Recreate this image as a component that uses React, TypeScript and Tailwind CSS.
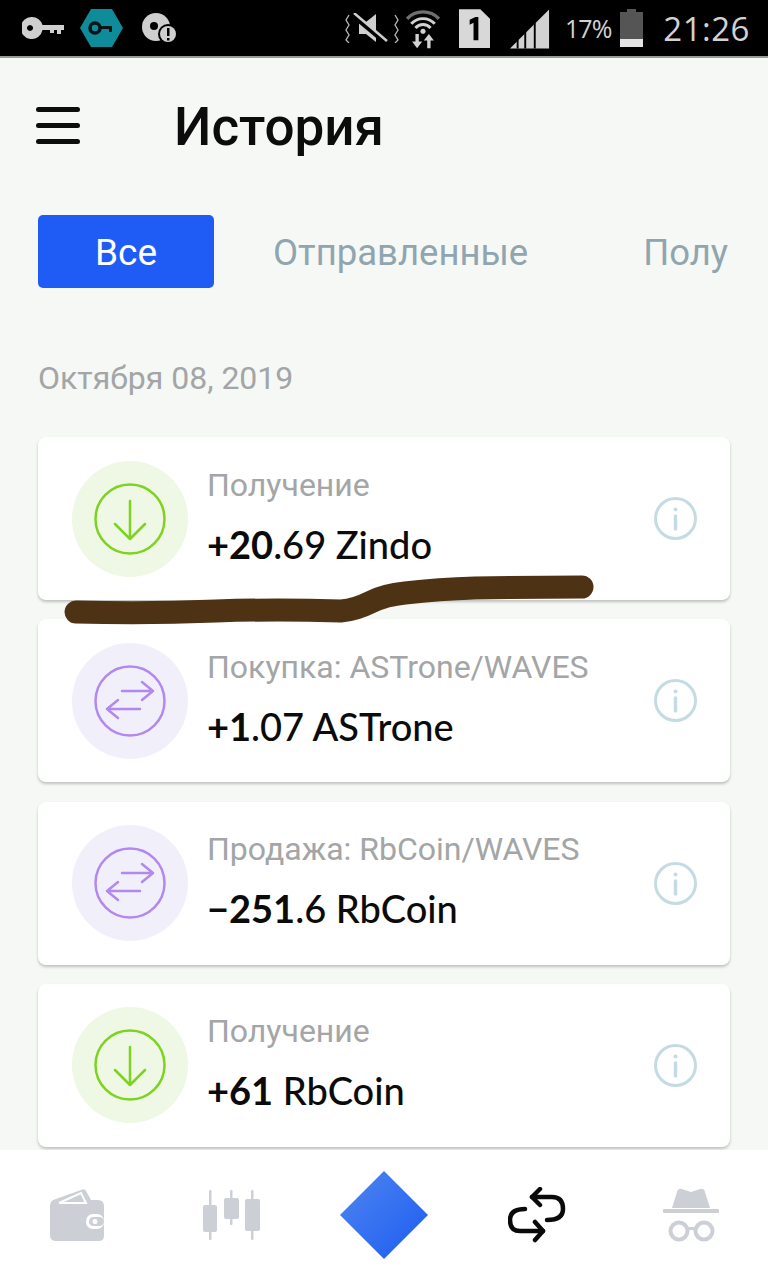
import React from 'react'

type Tx = {
  kind: 'in' | 'swap'
  title: string
  strong: string
  rest: string
}

const txs: Tx[] = [
  { kind: 'in', title: 'Получение', strong: '+20', rest: '.69 Zindo' },
  { kind: 'swap', title: 'Покупка: ASTrone/WAVES', strong: '+1', rest: '.07 ASTrone' },
  { kind: 'swap', title: 'Продажа: RbCoin/WAVES', strong: '−251', rest: '.6 RbCoin' },
  { kind: 'in', title: 'Получение', strong: '+61', rest: ' RbCoin' },
]

const LeftIcons = () => (
  <div className="flex items-center">
    <svg width="42" height="22" viewBox="0 0 42 22" className="ml-[22px]" fill="#cfcfcf">
      <path fillRule="evenodd" d="M10 0a11 11 0 0 1 10.500 8H42v5h-3v4h-4v-4h-3v3h-4v-3h-7.500A11 11 0 1 1 10 0zm-2 8a3 3 0 1 0 .01 0z" />
    </svg>
    <svg width="43" height="38" viewBox="0 0 43 38" className="ml-[16px]">
      <path d="M11 0h21l11 19-11 19H11L0 19z" fill="#0e8c99" />
      <circle cx="15" cy="19" r="5" fill="none" stroke="#0b1416" strokeWidth="3.500" />
      <path d="M20 17h12v6h-3v-3h-9z" fill="#0b1416" />
    </svg>
    <svg width="36" height="31" viewBox="0 0 36 31" className="ml-[19px]">
      <circle cx="14" cy="14" r="14" fill="#cfcfcf" />
      <circle cx="12" cy="13" r="4" fill="#000" />
      <circle cx="26" cy="21" r="10" fill="#000" />
      <circle cx="26" cy="21" r="8" fill="#cfcfcf" />
      <path d="M25 15h2.500v8H25zM25 25h2.500v2.500H25z" fill="#000" />
    </svg>
  </div>
)

const RightIcons = () => (
  <div className="flex items-center text-[#d2d2d2]">
    <svg width="54" height="30" viewBox="0 0 54 30" fill="none" className="mr-[5px]">
      <path d="M4 2L1 7l3 5-3 5 3 5-3 5 3 3M50 2l3 5-3 5 3 5-3 5 3 5-3 3" stroke="#b8b8b8" strokeWidth="1.300" />
      <path d="M14 9h7l10-8v28l-10-8h-7z" fill="#cfcfcf" />
      <path d="M9 3l32 27" stroke="#000" strokeWidth="5" />
      <path d="M9 0l33 28" stroke="#cfcfcf" strokeWidth="2.500" />
    </svg>
    <svg width="38" height="42" viewBox="0 0 40 50" fill="none" className="mr-[17px]">
      <path d="M1 14a26 26 0 0 1 38 0" stroke="#6f6f6f" strokeWidth="4" />
      <path d="M6 20a19 19 0 0 1 28 0" stroke="#d2d2d2" strokeWidth="3.500" />
      <path d="M11 25a12 12 0 0 1 18 0" stroke="#d2d2d2" strokeWidth="3.500" />
      <circle cx="20" cy="29" r="3" fill="#d2d2d2" />
      <path d="M11 32h4v9h4l-6 8-6-8h4zM25 49v-9h-4l6-8 6 8h-4v9z" fill="#d2d2d2" />
    </svg>
    <svg width="31" height="39" viewBox="0 0 32 40" className="mr-[20px]">
      <path d="M0 0h22l10 10v30H0z" fill="#d8d8d8" />
      <path d="M11 11l6-3h3v24h-5V14l-4 2z" fill="#000" />
    </svg>
    <svg width="40" height="41" viewBox="0 0 42 42" className="mr-[15px]">
      <path d="M0 42l41-41v41z" fill="#d2d2d2" />
      <path d="M8 42V33M16 42V24M26 42V14" stroke="#000" strokeWidth="2" />
    </svg>
    <span className="text-[25px] leading-none font-['Open_Sans',sans-serif] tracking-[-1px] mr-[9px]">17%</span>
    <div className="w-[23px] h-[38px] mr-[20px] flex flex-col items-center">
      <div className="w-[9px] h-[3px] bg-[#555]" />
      <div className="w-[23px] flex-1 bg-[#555] flex flex-col justify-end">
        <div className="h-[8px] bg-[#e4e4e4]" />
      </div>
    </div>
    <span className="text-[33px] leading-none font-['Open_Sans',sans-serif] mr-[18px] tracking-[0.500px]">21:26</span>
  </div>
)

const ReceiveIcon = () => (
  <svg width="72" height="72" viewBox="0 0 72 72" fill="none" stroke="#7ed321" strokeWidth="2.500" strokeLinecap="round" strokeLinejoin="round">
    <circle cx="36" cy="36" r="34.500" />
    <path d="M36 18v38M21 41l15 15 15-15" />
  </svg>
)

const SwapIcon = () => (
  <svg width="72" height="72" viewBox="0 0 72 72" fill="none" stroke="#b388f0" strokeWidth="2.500" strokeLinecap="round" strokeLinejoin="round">
    <circle cx="36" cy="36" r="34.500" />
    <path d="M28 26h31M48 17l11 9-11 9M46 44H13M24 35l-11 9 11 9" />
  </svg>
)

const InfoIcon = () => (
  <svg width="43" height="43" viewBox="0 0 43 43" fill="none" className="shrink-0">
    <circle cx="21.500" cy="21.500" r="20" stroke="#c5dbe3" strokeWidth="3" />
    <circle cx="21.500" cy="12.500" r="2" fill="#c5dbe3" />
    <path d="M21.500 19v13" stroke="#c5dbe3" strokeWidth="3.500" strokeLinecap="round" />
  </svg>
)

const TxCard = ({ tx }: { tx: Tx }) => (
  <div className="h-[163px] shrink-0 bg-white rounded-[8px] shadow-[0_2px_3px_rgba(0,0,0,0.22)] flex items-center pl-[34px] pr-[33px]">
    <div className={`w-[116px] h-[116px] rounded-full flex items-center justify-center shrink-0 ${tx.kind === 'in' ? 'bg-[#eef8e4]' : 'bg-[#f1f0fa]'}`}>
      {tx.kind === 'in' ? <ReceiveIcon /> : <SwapIcon />}
    </div>
    <div className="ml-[19px] flex-1 flex flex-col gap-[21px] pb-[7px]">
      <div className="text-[32px] leading-[36px] text-[#a3a5a6]">{tx.title}</div>
      <div className="text-[38px] leading-[40px] text-[#0b0b0b] font-['Lato',sans-serif]">
        <b className="font-bold">{tx.strong}</b>
        <span className="font-medium">{tx.rest}</span>
      </div>
    </div>
    <InfoIcon />
  </div>
)

const NavBar = () => (
  <nav className="h-[130px] shrink-0 bg-white flex items-center">
    <div className="w-[154px] flex justify-center">
      <svg width="54" height="52" viewBox="0 0 54 52">
        <path d="M0 16q0-3 3-5L31 1q4-2 5 1l5 9h7q6 0 6 6v30q0 5-5 5H6q-6 0-6-6z" fill="#ccd0d6" />
        <path d="M9 14L31 4l5 10z" fill="none" stroke="#fff" strokeWidth="2" />
        <rect x="36" y="25" width="18" height="15" rx="7" fill="#fff" />
        <rect x="39" y="28" width="15" height="9" rx="4.500" fill="#ccd0d6" />
        <circle cx="45" cy="32.500" r="2.500" fill="#fff" />
      </svg>
    </div>
    <div className="w-[153px] flex justify-center">
      <svg width="60" height="50" viewBox="0 0 60 50" fill="#ccd0d6">
        <rect x="8" y="0" width="2.500" height="50" rx="1" />
        <rect x="2" y="15" width="14" height="27" rx="2" />
        <rect x="29" y="0" width="2.500" height="35" rx="1" />
        <rect x="23" y="8" width="15" height="21" rx="2" />
        <rect x="50" y="0" width="2.500" height="50" rx="1" />
        <rect x="44" y="9" width="15" height="32" rx="2" />
      </svg>
    </div>
    <div className="w-[153px] flex justify-center">
      <svg width="90" height="90" viewBox="0 0 90 90">
        <defs>
          <linearGradient id="diamond" x1="0" y1="0" x2="1" y2="1">
            <stop offset="0" stopColor="#4f86f0" />
            <stop offset="1" stopColor="#1c5cf0" />
          </linearGradient>
        </defs>
        <path d="M45 1l44 44-44 44L1 45z" fill="url(#diamond)" />
      </svg>
    </div>
    <div className="w-[153px] flex justify-center">
      <svg width="58" height="56" viewBox="0 0 58 56" fill="none" stroke="#0a0a0a" strokeWidth="4.500" strokeLinecap="round" strokeLinejoin="round">
        <path d="M32 2l-8 8 8 8" />
        <path d="M24 10h20q11 0 11 12 0 11-16 11" />
        <path d="M27 35l8 9-8 9" />
        <path d="M35 44H12Q2 44 2 33q0-11 15-11" />
      </svg>
    </div>
    <div className="w-[155px] flex justify-center">
      <svg width="58" height="54" viewBox="0 0 58 54" fill="#ccd0d6">
        <path d="M10 20L15 4q1-4 5-3l9 3 9-3q4-1 5 3l5 16z" />
        <rect x="1" y="21" width="56" height="4" rx="1" />
        <circle cx="17" cy="43" r="8.500" fill="none" stroke="#ccd0d6" strokeWidth="4" />
        <circle cx="42" cy="43" r="8.500" fill="none" stroke="#ccd0d6" strokeWidth="4" />
        <rect x="25" y="39" width="9" height="3" />
      </svg>
    </div>
  </nav>
)

export default function App() {
  return (
    <div className="w-[768px] h-[1280px] overflow-hidden flex flex-col bg-[#f5f8f4] font-['Roboto',sans-serif]">
      {/* Status bar */}
      <div className="h-[58px] shrink-0 bg-black border-b-2 border-[#9a9a95] flex items-center justify-between">
        <LeftIcons />
        <RightIcons />
      </div>

      {/* Header */}
      <div className="h-[139px] shrink-0 flex items-center pl-[36px] pb-[4px]">
        <div className="w-[44px] flex flex-col gap-[11px]">
          <div className="h-[5px] rounded-full bg-[#0d0d0d]" />
          <div className="h-[5px] rounded-full bg-[#0d0d0d]" />
          <div className="h-[5px] rounded-full bg-[#0d0d0d]" />
        </div>
        <h1 className="ml-[94px] pt-[3px] text-[53px] leading-none font-medium text-[#0c0c0c]">История</h1>
      </div>

      {/* Tabs */}
      <div className="flex items-center pl-[38px] h-[74px] shrink-0 mt-[17px]">
        <div className="w-[176px] h-[73px] pt-[4px] rounded-[5px] bg-[#1f5cf5] text-white text-[37px] flex items-center justify-center">Все</div>
        <div className="ml-[59px] pt-[4px] text-[36.500px] text-[#90a5b0] whitespace-nowrap">Отправленные</div>
        <div className="ml-[115px] pt-[4px] text-[36.500px] text-[#90a5b0] whitespace-nowrap">Полу</div>
      </div>

      {/* History */}
      <div className="flex-1 min-h-0 overflow-hidden px-[38px]">
        <div className="mt-[72px] text-[32px] leading-[36px] text-[#a3a5a6]">Октября 08, 2019</div>
        <div className="mt-[41px] flex flex-col gap-[19.300px]">
          {txs.map((tx, i) => (
            <TxCard key={i} tx={tx} />
          ))}
        </div>
      </div>

      <NavBar />

      {/* Scribble over the first card */}
      <svg width="768" height="70" viewBox="0 0 768 70" fill="none" className="absolute left-0 top-[563px] pointer-events-none">
        <path d="M76 49q70 2 140-1 60-2 125 0 14-1 30-9 14-7 34-9 34-4 70-5 50-1 107-1" stroke="#4d3213" strokeWidth="23" strokeLinecap="round" strokeLinejoin="round" />
      </svg>
    </div>
  )
}
